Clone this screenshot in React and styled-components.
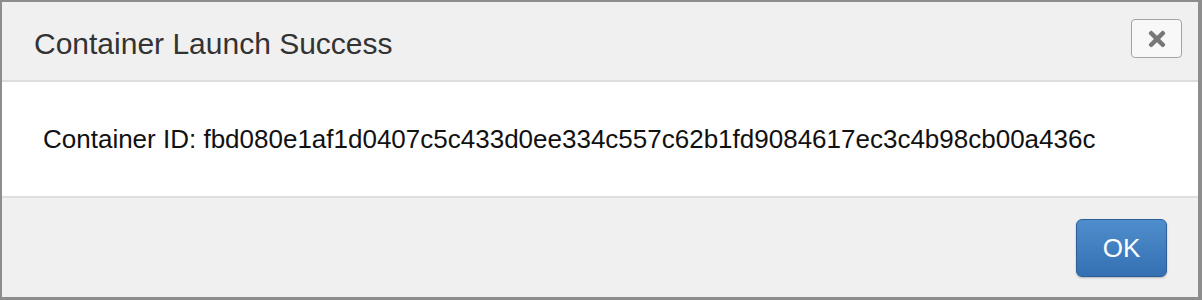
import styled, { createGlobalStyle } from 'styled-components';
import { FaTimes } from 'react-icons/fa';

const GlobalStyle = createGlobalStyle`
    html, body {
        margin: 0;
        padding: 0;
        background: #ffffff;
    }
    * {
        box-sizing: border-box;
    }
`;

const Dialog = styled.div`
    width: 1202px;
    height: 300px;
    display: flex;
    flex-direction: column;
    border-style: solid;
    border-color: #8d8d8d;
    border-width: 2px 4px 3px 2px;
    font-family: "Liberation Sans", Arial, Helvetica, sans-serif;
    background: #ffffff;
`;

const Header = styled.header`
    height: 80px;
    flex-shrink: 0;
    display: flex;
    justify-content: space-between;
    align-items: flex-start;
    padding: 0 16px 0 32px;
    background: #f0f0f0;
    border-bottom: 2px solid #dedede;
`;

const Title = styled.h1`
    margin: 25px 0 0 0;
    font-size: 30px;
    font-weight: 400;
    line-height: normal;
    color: #333333;
`;

const CloseButton = styled.button`
    margin-top: 17px;
    width: 51px;
    height: 39px;
    display: flex;
    align-items: center;
    justify-content: center;
    border: 1px solid #a3a3a3;
    border-radius: 4px;
    background: #f8f8f8;
    color: #777777;
    padding: 0;
    cursor: pointer;
`;

const Body = styled.section`
    height: 116px;
    flex-shrink: 0;
    padding: 42px 40px 0 41px;
    border-bottom: 2px solid #dedede;
`;

const Message = styled.p`
    margin: 0;
    font-size: 26px;
    line-height: normal;
    color: #111111;
`;

const Footer = styled.footer`
    flex: 1;
    display: flex;
    justify-content: flex-end;
    align-items: flex-start;
    padding: 21px 31px 0 0;
    background: #f0f0f0;
`;

const PrimaryButton = styled.button`
    width: 91px;
    height: 58px;
    border: 1px solid #2d5f9b;
    border-radius: 6px;
    background: linear-gradient(to bottom, #4f8ecd 0%, #3470b3 100%);
    box-shadow: 0 1px 2px rgba(0, 0, 0, 0.25);
    color: #ffffff;
    font-family: "Liberation Sans", Arial, Helvetica, sans-serif;
    font-size: 26px;
    padding: 0;
    cursor: pointer;
`;

const App = () => (
    <>
        <GlobalStyle />
        <Dialog>
            <Header>
                <Title>Container Launch Success</Title>
                <CloseButton aria-label="Close">
                    <FaTimes size={24} />
                </CloseButton>
            </Header>
            <Body>
                <Message>
                    Container ID: fbd080e1af1d0407c5c433d0ee334c557c62b1fd9084617ec3c4b98cb00a436c
                </Message>
            </Body>
            <Footer>
                <PrimaryButton>OK</PrimaryButton>
            </Footer>
        </Dialog>
    </>
);

export default App;
